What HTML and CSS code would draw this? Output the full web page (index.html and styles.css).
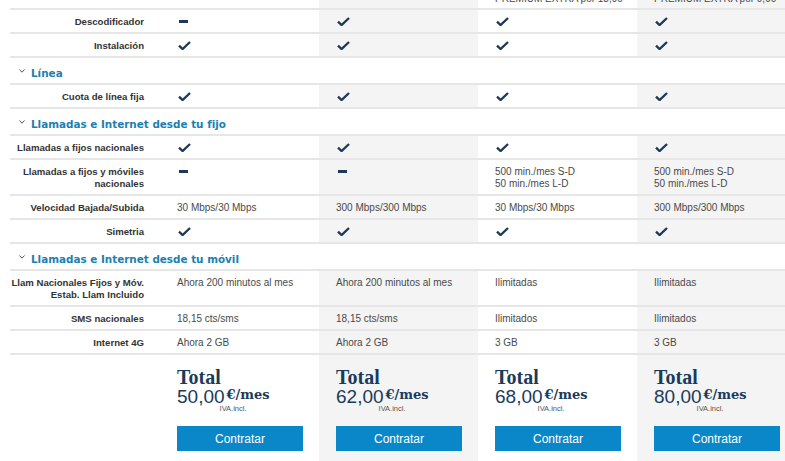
FILE: index.html
```html
<!DOCTYPE html>
<html lang="es">
<head>
<meta charset="utf-8">
<title>Comparativa de tarifas</title>
<link rel="stylesheet" href="styles.css">
</head>
<body>
<div class="plans">
  <div class="row row-top">
    <div class="label"></div>
    <div class="cell"></div>
    <div class="cell alt"></div>
    <div class="cell"><span>PREMIUM EXTRA por 13,90</span></div>
    <div class="cell alt"><span>PREMIUM EXTRA por 9,90</span></div>
  </div>

  <div class="row">
    <div class="label">Descodificador</div>
    <div class="cell"><span class="dash"></span></div>
    <div class="cell alt"><svg class="check" viewBox="0 0 13 9"><path d="M1 4.6 L4.6 8 L12 1"/></svg></div>
    <div class="cell"><svg class="check" viewBox="0 0 13 9"><path d="M1 4.6 L4.6 8 L12 1"/></svg></div>
    <div class="cell alt"><svg class="check" viewBox="0 0 13 9"><path d="M1 4.6 L4.6 8 L12 1"/></svg></div>
  </div>
  <div class="row">
    <div class="label">Instalación</div>
    <div class="cell"><svg class="check" viewBox="0 0 13 9"><path d="M1 4.6 L4.6 8 L12 1"/></svg></div>
    <div class="cell alt"><svg class="check" viewBox="0 0 13 9"><path d="M1 4.6 L4.6 8 L12 1"/></svg></div>
    <div class="cell"><svg class="check" viewBox="0 0 13 9"><path d="M1 4.6 L4.6 8 L12 1"/></svg></div>
    <div class="cell alt"><svg class="check" viewBox="0 0 13 9"><path d="M1 4.6 L4.6 8 L12 1"/></svg></div>
  </div>

  <div class="section"><svg class="chev" viewBox="0 0 6 4"><path d="M0.5 0.5 L3 3.2 L5.5 0.5"/></svg>Línea</div>
  <div class="row">
    <div class="label">Cuota de línea fija</div>
    <div class="cell"><svg class="check" viewBox="0 0 13 9"><path d="M1 4.6 L4.6 8 L12 1"/></svg></div>
    <div class="cell alt"><svg class="check" viewBox="0 0 13 9"><path d="M1 4.6 L4.6 8 L12 1"/></svg></div>
    <div class="cell"><svg class="check" viewBox="0 0 13 9"><path d="M1 4.6 L4.6 8 L12 1"/></svg></div>
    <div class="cell alt"><svg class="check" viewBox="0 0 13 9"><path d="M1 4.6 L4.6 8 L12 1"/></svg></div>
  </div>

  <div class="section"><svg class="chev" viewBox="0 0 6 4"><path d="M0.5 0.5 L3 3.2 L5.5 0.5"/></svg>Llamadas e Internet desde tu fijo</div>
  <div class="row">
    <div class="label">Llamadas a fijos nacionales</div>
    <div class="cell"><svg class="check" viewBox="0 0 13 9"><path d="M1 4.6 L4.6 8 L12 1"/></svg></div>
    <div class="cell alt"><svg class="check" viewBox="0 0 13 9"><path d="M1 4.6 L4.6 8 L12 1"/></svg></div>
    <div class="cell"><svg class="check" viewBox="0 0 13 9"><path d="M1 4.6 L4.6 8 L12 1"/></svg></div>
    <div class="cell alt"><svg class="check" viewBox="0 0 13 9"><path d="M1 4.6 L4.6 8 L12 1"/></svg></div>
  </div>
  <div class="row">
    <div class="label">Llamadas a fijos y móviles<br>nacionales</div>
    <div class="cell"><span class="dash"></span></div>
    <div class="cell alt"><span class="dash"></span></div>
    <div class="cell">500 min./mes S-D<br>50 min./mes L-D</div>
    <div class="cell alt">500 min./mes S-D<br>50 min./mes L-D</div>
  </div>
  <div class="row">
    <div class="label">Velocidad Bajada/Subida</div>
    <div class="cell">30 Mbps/30 Mbps</div>
    <div class="cell alt">300 Mbps/300 Mbps</div>
    <div class="cell">30 Mbps/30 Mbps</div>
    <div class="cell alt">300 Mbps/300 Mbps</div>
  </div>
  <div class="row">
    <div class="label">Simetria</div>
    <div class="cell"><svg class="check" viewBox="0 0 13 9"><path d="M1 4.6 L4.6 8 L12 1"/></svg></div>
    <div class="cell alt"><svg class="check" viewBox="0 0 13 9"><path d="M1 4.6 L4.6 8 L12 1"/></svg></div>
    <div class="cell"><svg class="check" viewBox="0 0 13 9"><path d="M1 4.6 L4.6 8 L12 1"/></svg></div>
    <div class="cell alt"><svg class="check" viewBox="0 0 13 9"><path d="M1 4.6 L4.6 8 L12 1"/></svg></div>
  </div>

  <div class="section"><svg class="chev" viewBox="0 0 6 4"><path d="M0.5 0.5 L3 3.2 L5.5 0.5"/></svg>Llamadas e Internet desde tu móvil</div>
  <div class="row">
    <div class="label">Llam Nacionales Fijos y Móv.<br>Estab. Llam Incluido</div>
    <div class="cell">Ahora 200 minutos al mes</div>
    <div class="cell alt">Ahora 200 minutos al mes</div>
    <div class="cell">Ilimitadas</div>
    <div class="cell alt">Ilimitadas</div>
  </div>
  <div class="row">
    <div class="label">SMS nacionales</div>
    <div class="cell">18,15 cts/sms</div>
    <div class="cell alt">18,15 cts/sms</div>
    <div class="cell">Ilimitados</div>
    <div class="cell alt">Ilimitados</div>
  </div>
  <div class="row">
    <div class="label">Internet 4G</div>
    <div class="cell">Ahora 2 GB</div>
    <div class="cell alt">Ahora 2 GB</div>
    <div class="cell">3 GB</div>
    <div class="cell alt">3 GB</div>
  </div>

  <div class="row row-total">
    <div class="label"></div>
    <div class="cell">
      <div class="total">Total</div>
      <div class="price"><span class="num">50,00</span><span class="unit"><span class="eur">€/mes</span><span class="iva">IVA.incl.</span></span></div>
      <button class="buy">Contratar</button>
    </div>
    <div class="cell alt">
      <div class="total">Total</div>
      <div class="price"><span class="num">62,00</span><span class="unit"><span class="eur">€/mes</span><span class="iva">IVA.incl.</span></span></div>
      <button class="buy">Contratar</button>
    </div>
    <div class="cell">
      <div class="total">Total</div>
      <div class="price"><span class="num">68,00</span><span class="unit"><span class="eur">€/mes</span><span class="iva">IVA.incl.</span></span></div>
      <button class="buy">Contratar</button>
    </div>
    <div class="cell alt">
      <div class="total">Total</div>
      <div class="price"><span class="num">80,00</span><span class="unit"><span class="eur">€/mes</span><span class="iva">IVA.incl.</span></span></div>
      <button class="buy">Contratar</button>
    </div>
  </div>
</div>
</body>
</html>
```

FILE: styles.css
```css
html, body {
  margin: 0;
  padding: 0;
  background: #ffffff;
  overflow: hidden;
}

body {
  font-family: "Liberation Sans", Arial, sans-serif;
  font-size: 10px;
  color: #444444;
}

.plans {
  margin-left: 10px;
  width: 775px;
  overflow: hidden;
}

.row {
  display: grid;
  grid-template-columns: 150px 159px 159px 159px 159px;
  border-bottom: 2px solid #e6e6e6;
}

.label {
  padding: 6px 16px 4px 0;
  text-align: right;
  font-weight: bold;
  font-size: 9.6px;
  color: #333333;
  line-height: 12px;
  white-space: nowrap;
  background: #ffffff;
}

.cell {
  padding: 6px 0 4px 17px;
  line-height: 12px;
  color: #4a4a4a;
  background: #ffffff;
}

.cell.alt {
  background: #f4f4f4;
}

.row-top .label,
.row-top .cell {
  height: 8px;
  padding-top: 0;
  padding-bottom: 0;
  display: flex;
  align-items: flex-end;
  overflow: hidden;
  white-space: nowrap;
}

.row-top .cell span {
  margin-bottom: 3px;
}

.check {
  display: block;
  width: 13px;
  height: 9px;
  margin-top: 1px;
  margin-left: 1px;
}

.check path {
  fill: none;
  stroke: #1d3b58;
  stroke-width: 2.4;
}

.dash {
  display: block;
  width: 9px;
  height: 3px;
  margin: 4px 0 0 2px;
  background: #1d3b58;
}

.section {
  display: flex;
  align-items: center;
  height: 27px;
  box-sizing: border-box;
  padding: 4px 0 0 9px;
  border-bottom: 2px solid #e6e6e6;
  font-family: "DejaVu Sans", Verdana, sans-serif;
  font-weight: bold;
  font-size: 10.4px;
  color: #1b80b0;
  background: #ffffff;
}

.chev {
  width: 6px;
  height: 4px;
  margin: -3px 6px 0 0;
}

.chev path {
  fill: none;
  stroke: #555555;
  stroke-width: 1;
}

.row-total {
  border-bottom: none;
}

.row-total .cell {
  padding: 12px 0 12px 17px;
  height: 84px;
}

.total {
  font-family: "Liberation Serif", "Times New Roman", serif;
  font-weight: bold;
  font-size: 20px;
  line-height: 20px;
  color: #1b3b5a;
}

.price {
  display: flex;
  align-items: flex-start;
  height: 19px;
  color: #1b3b5a;
}

.num {
  font-size: 19px;
  line-height: 19px;
}

.unit {
  display: flex;
  flex-direction: column;
  margin-left: 2px;
}

.eur {
  font-family: "DejaVu Serif", serif;
  font-weight: bold;
  font-size: 13px;
  line-height: 13px;
  margin-top: 1px;
  white-space: nowrap;
}

.iva {
  font-size: 7.5px;
  line-height: 8px;
  margin: 4px 0 0 -7px;
  color: #555555;
  white-space: nowrap;
}

.buy {
  display: block;
  width: 126px;
  height: 25px;
  margin-top: 20px;
  padding: 0;
  border: none;
  background: #0a87c9;
  color: #ffffff;
  font-family: "Liberation Sans", Arial, sans-serif;
  font-size: 12px;
  cursor: pointer;
}
```
